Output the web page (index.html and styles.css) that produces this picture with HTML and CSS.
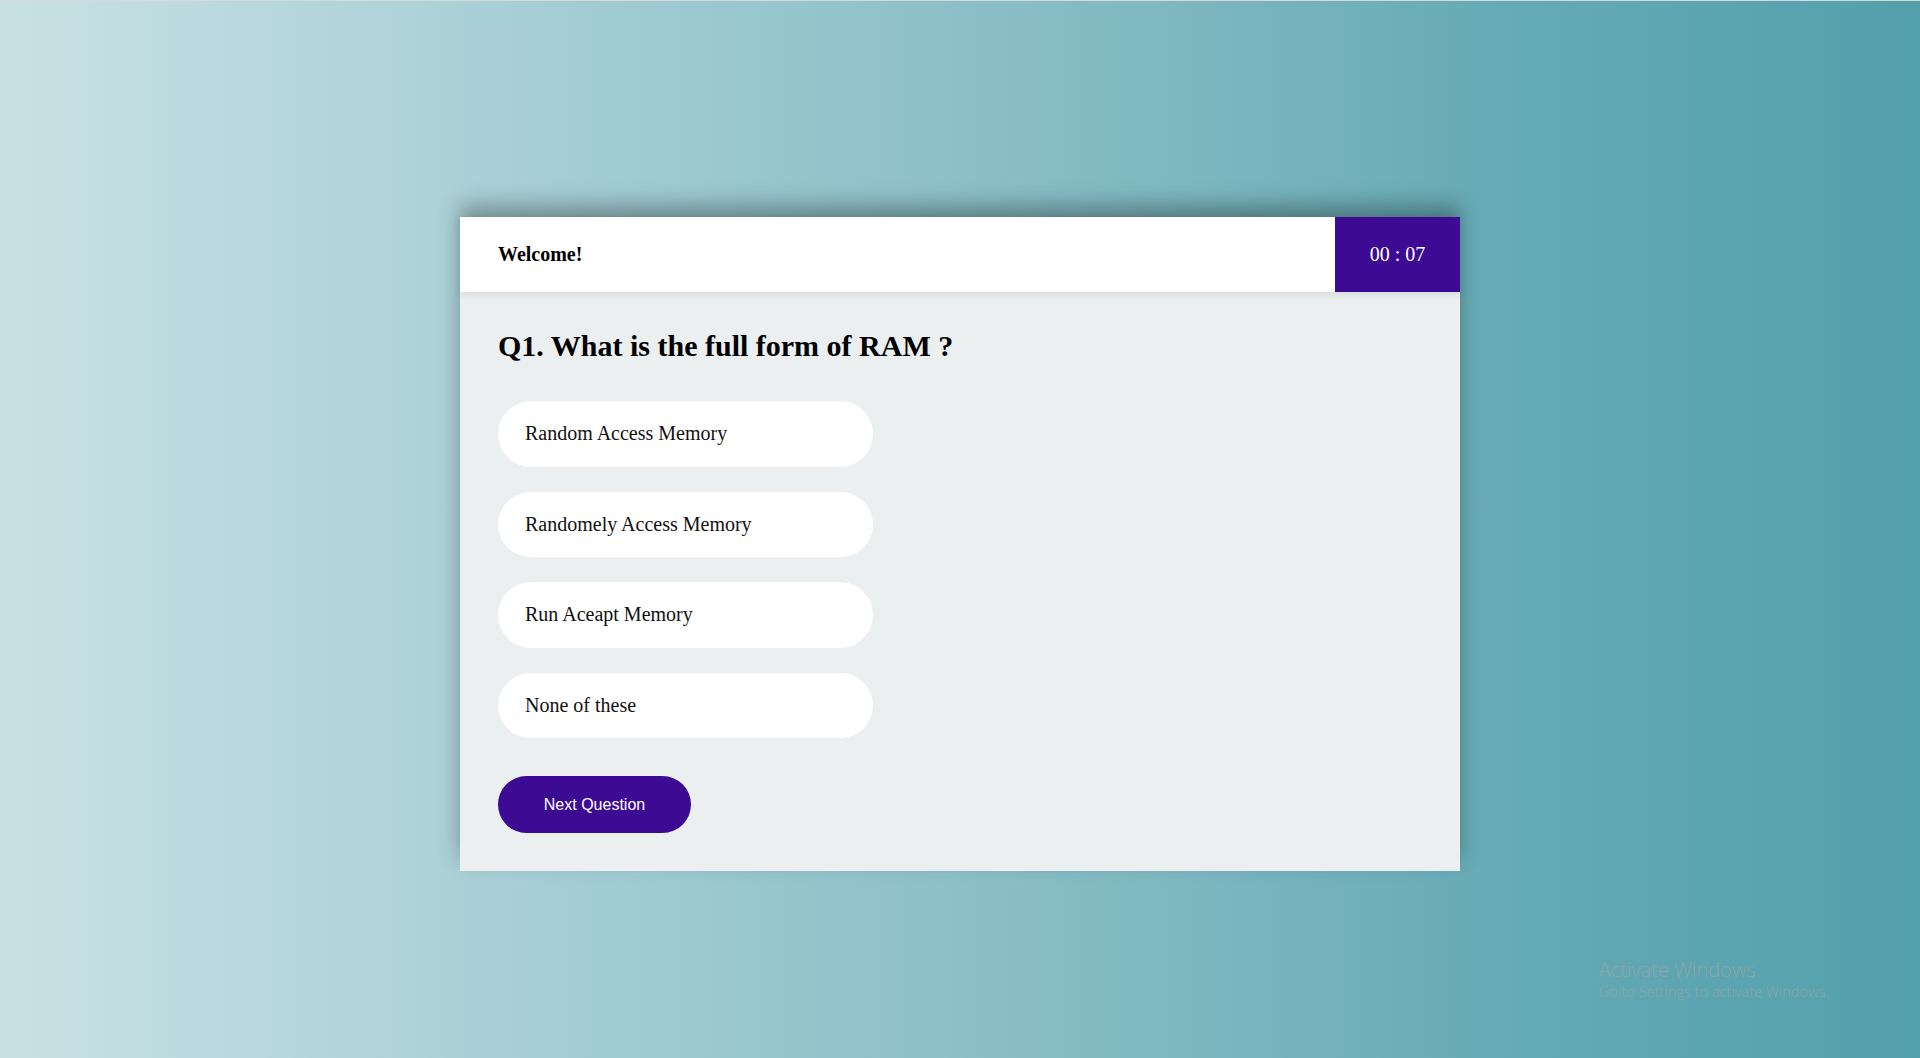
FILE: index.html
```html
<!DOCTYPE html>
<html lang="en">
<head>
<meta charset="utf-8">
<title>Quiz</title>
<link rel="stylesheet" href="styles.css">
</head>
<body>
<main class="page">
  <section class="quiz-card">
    <header class="quiz-header">
      <h3 class="welcome">Welcome!</h3>
      <div class="timer">00 : 07</div>
    </header>
    <div class="quiz-body">
      <h2 class="question">Q1. What is the full form of RAM ?</h2>
      <ul class="options">
        <li class="option">Random Access Memory</li>
        <li class="option">Randomely Access Memory</li>
        <li class="option">Run Aceapt Memory</li>
        <li class="option">None of these</li>
      </ul>
      <button class="next-btn" type="button">Next Question</button>
    </div>
  </section>
</main>
<div class="activate">
  <div class="activate-title">Activate Windows</div>
  <div class="activate-sub">Go to Settings to activate Windows.</div>
</div>
</body>
</html>
```
FILE: styles.css
```css
* {
  box-sizing: border-box;
}

html, body {
  margin: 0;
  padding: 0;
}

body {
  min-height: 100vh;
  font-family: "Liberation Serif", "Times New Roman", serif;
  background: linear-gradient(to right, #c9e1e5 0%, #a9d0d6 25%, #86bcc4 55%, #66abb5 78%, #52a0ac 100%);
  border-top: 1px solid #d6d9da;
  overflow: hidden;
}

.page {
  display: flex;
  justify-content: center;
  padding-top: 216px;
}

.quiz-card {
  width: 1000px;
  background: #ebeff0;
  box-shadow: 0 -12px 20px rgba(0, 0, 0, 0.3);
}

.quiz-header {
  height: 75px;
  background: #ffffff;
  display: flex;
  align-items: center;
  justify-content: space-between;
  padding-left: 38px;
  box-shadow: 0 2px 8px rgba(0, 0, 0, 0.1);
  position: relative;
}

.welcome {
  margin: 0;
  font-size: 20px;
  font-weight: bold;
  color: #000;
}

.timer {
  width: 125px;
  height: 75px;
  background: #3c0a93;
  color: #ffffff;
  font-size: 20px;
  display: flex;
  align-items: center;
  justify-content: center;
}

.quiz-body {
  padding: 37px 38px 38px 38px;
}

.question {
  margin: 0 0 38px 0;
  font-size: 30px;
  font-weight: bold;
  color: #000;
}

.options {
  list-style: none;
  margin: 0;
  padding: 0;
  display: flex;
  flex-direction: column;
  gap: 25px;
}

.option {
  width: 375px;
  height: 65.5px;
  background: #ffffff;
  border-radius: 40px;
  display: flex;
  align-items: center;
  padding-left: 27px;
  font-size: 20px;
  color: #111;
}

.next-btn {
  margin-top: 38px;
  width: 193px;
  height: 57px;
  border: none;
  border-radius: 30px;
  background: #3c0a93;
  color: #ffffff;
  font-family: "Liberation Sans", Arial, sans-serif;
  font-size: 16px;
  padding: 0;
  display: block;
}

.activate {
  position: fixed;
  left: 1599px;
  top: 958px;
  color: rgba(150, 165, 165, 0.85);
  font-family: "Open Sans", "Noto Sans", sans-serif;
  line-height: 1.2;
}

.activate-title {
  font-size: 20px;
  font-weight: 300;
}

.activate-sub {
  font-size: 14.6px;
  font-weight: 300;
  margin-top: 1px;
}
```
